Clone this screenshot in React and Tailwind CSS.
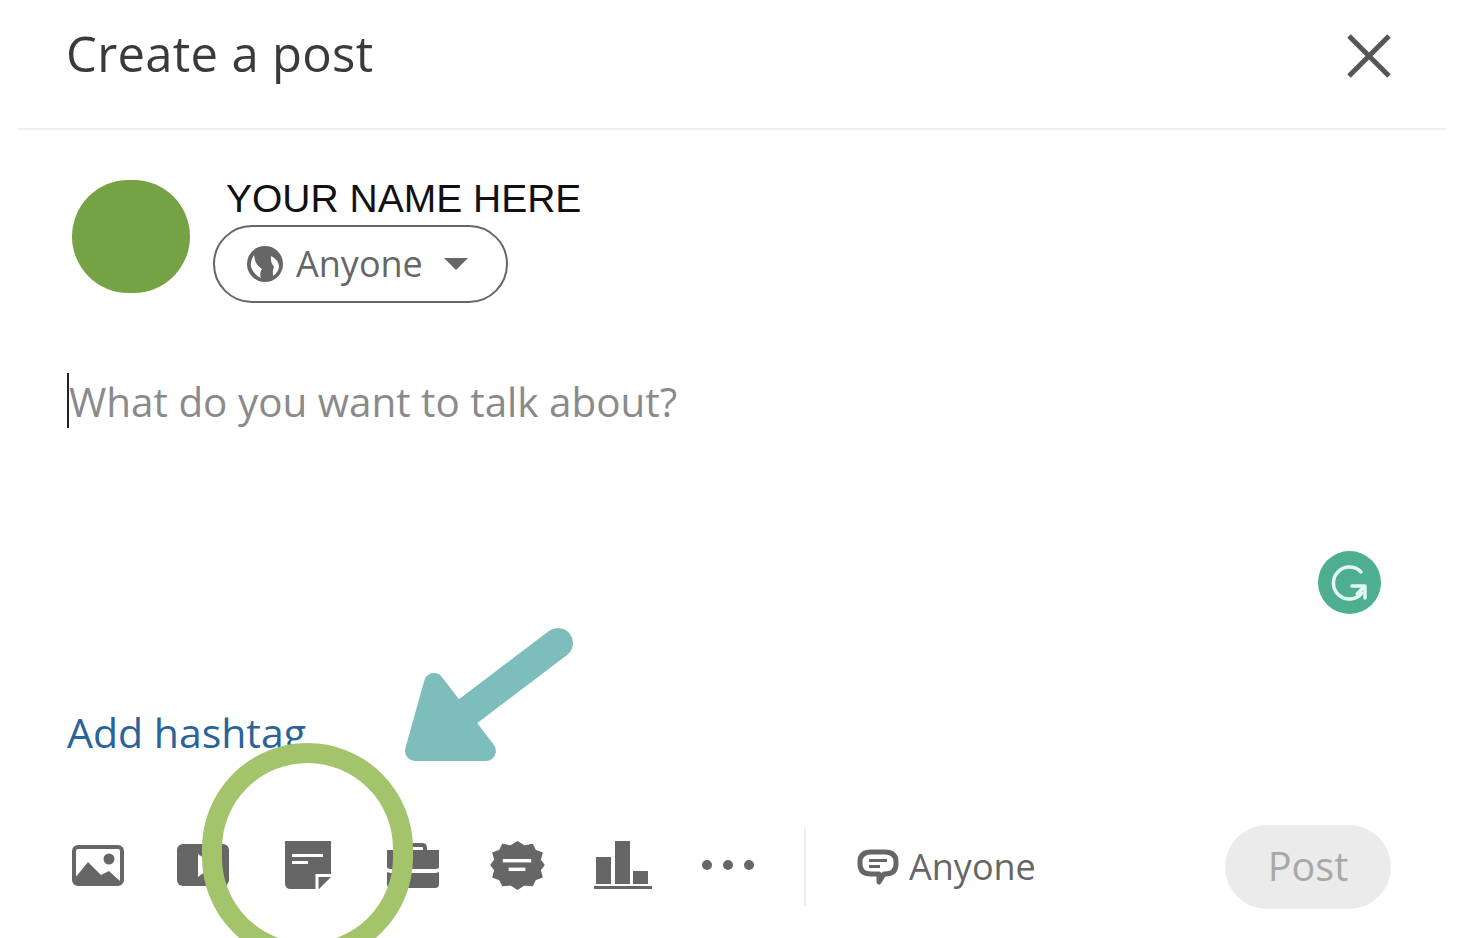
const ICON = "#666666";

function ImageIcon() {
  return (
    <svg width="52" height="41" viewBox="0 0 52 41">
      <rect x="2" y="2" width="48" height="37" rx="4" fill="none" stroke={ICON} strokeWidth="4" />
      <circle cx="37" cy="14" r="5.5" fill={ICON} />
      <path d="M3 38 V33 L16 17 L29 30 L37 26 L49 37 V39 H3 Z" fill={ICON} />
    </svg>
  );
}
function VideoIcon() {
  return (
    <svg width="52" height="42" viewBox="0 0 52 42">
      <rect x="0" y="0" width="52" height="42" rx="6" fill={ICON} />
      <path d="M21 10 L37 21 L21 33 Z" fill="#fff" />
    </svg>
  );
}
function NoteIcon() {
  return (
    <svg width="46" height="48" viewBox="0 0 46 48">
      <path d="M0 0 H46 V36 L34 48 H6 Q0 48 0 42 Z" fill={ICON} />
      <rect x="7" y="13" width="31" height="3" fill="#fff" />
      <rect x="7" y="20" width="16" height="3" fill="#fff" />
      <path d="M32 48 V34.5 H46" fill="none" stroke="#fff" strokeWidth="3" />
    </svg>
  );
}
function CaseIcon() {
  return (
    <svg width="52" height="45" viewBox="0 0 52 45">
      <path d="M14 8 V5 Q14 2 17 2 H35 Q38 2 38 5 V8" fill="none" stroke={ICON} strokeWidth="4" />
      <path d="M0 7 H52 V24 Q52 26 47 26 H5 Q0 26 0 24 Z" fill={ICON} />
      <path d="M0 29 Q2 30 5 30 H47 Q50 30 52 29 V41 Q52 45 48 45 H4 Q0 45 0 41 Z" fill={ICON} />
    </svg>
  );
}
function BadgeIcon() {
  return (
    <svg width="55" height="50" viewBox="0 0 56 58" preserveAspectRatio="none">
      <path
        d="M28 2 L35 7 L43 5 L46 12 L53 15 L51 23 L55 29 L51 35 L53 43 L46 46 L43 53 L35 52 L28 57 L21 52 L13 53 L10 46 L3 43 L5 35 L1 29 L5 23 L3 15 L10 12 L13 5 L21 7 Z"
        fill={ICON}
        stroke={ICON}
        strokeWidth="1.5"
        strokeLinejoin="round"
      />
      <rect x="13" y="22" width="29" height="4" fill="#fff" />
      <rect x="19" y="32" width="17" height="4" fill="#fff" />
    </svg>
  );
}
function ChartIcon() {
  return (
    <svg width="58" height="49" viewBox="0 0 58 49">
      <rect x="2" y="16" width="15" height="27" fill={ICON} />
      <rect x="21" y="0" width="15" height="43" fill={ICON} />
      <rect x="39" y="30" width="15" height="13" fill={ICON} />
      <rect x="0" y="45" width="58" height="3" fill={ICON} />
    </svg>
  );
}
function DotsIcon() {
  return (
    <svg width="54" height="14" viewBox="0 0 54 14">
      <circle cx="6" cy="7" r="5" fill={ICON} />
      <circle cx="27" cy="7" r="5" fill={ICON} />
      <circle cx="48" cy="7" r="5" fill={ICON} />
    </svg>
  );
}
function CommentIcon() {
  return (
    <svg width="42" height="37" viewBox="0 0 42 37">
      <path
        d="M14 3 H28 Q39 3 39 13 V15 Q39 25 28 25 H27 L22 33 V25 H14 Q3 25 3 15 V13 Q3 3 14 3 Z"
        fill="none"
        stroke={ICON}
        strokeWidth="5"
        strokeLinejoin="round"
      />
      <rect x="12" y="10" width="18" height="3" fill={ICON} />
      <rect x="12" y="16" width="11" height="3" fill={ICON} />
    </svg>
  );
}
function GlobeIcon() {
  return (
    <svg width="36" height="36" viewBox="0 0 36 36" className="shrink-0">
      <circle cx="18" cy="18" r="18" fill={ICON} />
      <path d="M7 9 Q3 15 4 21 Q7 29 14 32 Q12 27 15 23 Q9 19 8 14 Z" fill="#fff" />
      <path d="M24 10 Q32 14 32 21 Q31 27 26 30 Q25 25 27 21 Q23 16 24 10 Z" fill="#fff" />
    </svg>
  );
}
function GrammarlyIcon() {
  return (
    <div className="flex h-[63px] w-[63px] items-center justify-center rounded-full bg-[#4dae90]">
      <svg width="42" height="42" viewBox="0 0 42 42" fill="none">
        <path d="M32 10 A16 16 0 1 0 33 31" stroke="#e4f7f1" strokeWidth="3.5" strokeLinecap="round" />
        <path d="M23 24 H36 V36 M36 24 L28 32" stroke="#e4f7f1" strokeWidth="3.5" strokeLinecap="round" strokeLinejoin="round" />
      </svg>
    </div>
  );
}

const tools = [ImageIcon, VideoIcon, NoteIcon, CaseIcon, BadgeIcon, ChartIcon, DotsIcon];

export default function App() {
  return (
    <div
      className="relative flex h-[938px] w-[1464px] flex-col overflow-hidden bg-white"
      style={{ fontFamily: '"Open Sans", "Noto Sans", sans-serif' }}
    >
      <header className="mx-[17px] flex h-[130px] shrink-0 items-start justify-between border-b-2 border-[#efefef] pl-[49px] pr-[55px] pt-[22px]">
        <h1 className="text-[49px] font-normal leading-[62px] tracking-[0.3px] text-[#3a3a3a]">Create a post</h1>
        <svg width="46" height="46" viewBox="0 0 46 46" className="mt-[11px]">
          <path d="M3 3 L43 43 M43 3 L3 43" stroke="#555" strokeWidth="5" />
        </svg>
      </header>

      <section className="flex pl-[72px] pt-[50px]">
        <div className="h-[113px] w-[118px] rounded-full bg-[#75a244]" />
        <div className="ml-[23px] flex -translate-y-[2px] flex-col">
          <div className="pl-[13px] text-[39px] leading-[42px] text-[#111]" style={{ fontFamily: '"Liberation Sans", sans-serif' }}>
            YOUR NAME HERE
          </div>
          <div className="mt-[5px] flex h-[78px] w-[295px] items-center rounded-full border-2 border-[#666] pl-[32px]">
            <GlobeIcon />
            <span className="ml-[13px] text-[36px] leading-none text-[#666]">Anyone</span>
            <svg width="26" height="14" viewBox="0 0 26 14" className="ml-[20px]">
              <path d="M1 1 H25 L13 13 Z" fill={ICON} />
            </svg>
          </div>
        </div>
      </section>

      <section className="relative mt-[68px] flex pl-[67px]">
        <div className="h-[55px] w-[2px] bg-[#222]" />
        <div className="text-[40.4px] leading-[58px] text-[#8a8a8a]">What do you want to talk about?</div>
      </section>

      <div className="mt-[120px] flex justify-end pr-[83px]">
        <GrammarlyIcon />
      </div>

      <div className="mt-[91px] h-[54px] pl-[67px] text-[41px] font-medium leading-[54px] text-[#2a6399]">
        Add hashtag
      </div>

      <footer className="mt-[66px] flex h-[84px] items-center pl-[45px] pr-[73px]">
        {tools.map((Tool, i) => (
          <div key={i} className="flex w-[105px] -translate-y-[2px] justify-center">
            <Tool />
          </div>
        ))}
        <div className="ml-[24px] h-[78px] w-[2px] bg-[#ececec]" />
        <div className="ml-[51px] flex items-center">
          <CommentIcon />
          <span className="ml-[10px] text-[36px] leading-none text-[#666]">Anyone</span>
        </div>
        <button className="ml-auto flex h-[84px] w-[166px] items-center justify-center rounded-full bg-[#ebebeb] text-[39.5px] text-[#a8a8a8]">
          Post
        </button>
      </footer>

      <svg width="190" height="150" viewBox="0 0 190 150" className="absolute left-[395px] top-[620px]">
        <path d="M72 92 L163 23" stroke="#7dbdbc" strokeWidth="30" strokeLinecap="round" />
        <path d="M20 131 L39 63 L91 131 Z" fill="#7dbdbc" stroke="#7dbdbc" strokeWidth="20" strokeLinejoin="round" />
      </svg>

      <div className="absolute left-[202px] top-[743px] h-[220px] w-[211px] rounded-full border-[20px] border-[#a3c46a]" />
    </div>
  );
}
